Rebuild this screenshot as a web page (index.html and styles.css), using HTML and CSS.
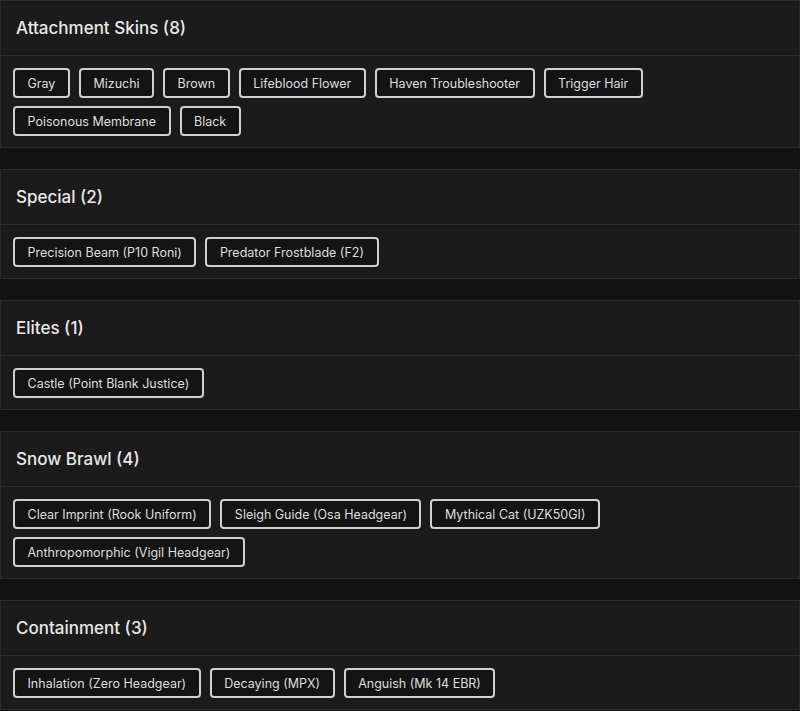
FILE: index.html
```html
<!DOCTYPE html>
<html>
<head>
<meta charset="utf-8">
<link rel="stylesheet" href="styles.css">
</head>
<body>
<div class="list">
  <section class="card">
    <div class="card-head">Attachment Skins (8)</div>
    <div class="card-body">
      <span class="tag">Gray</span>
      <span class="tag">Mizuchi</span>
      <span class="tag">Brown</span>
      <span class="tag">Lifeblood Flower</span>
      <span class="tag">Haven Troubleshooter</span>
      <span class="tag">Trigger Hair</span>
      <span class="tag">Poisonous Membrane</span>
      <span class="tag">Black</span>
    </div>
  </section>
  <section class="card">
    <div class="card-head">Special (2)</div>
    <div class="card-body">
      <span class="tag">Precision Beam (P10 Roni)</span>
      <span class="tag">Predator Frostblade (F2)</span>
    </div>
  </section>
  <section class="card">
    <div class="card-head">Elites (1)</div>
    <div class="card-body">
      <span class="tag">Castle (Point Blank Justice)</span>
    </div>
  </section>
  <section class="card">
    <div class="card-head">Snow Brawl (4)</div>
    <div class="card-body">
      <span class="tag">Clear Imprint (Rook Uniform)</span>
      <span class="tag">Sleigh Guide (Osa Headgear)</span>
      <span class="tag">Mythical Cat (UZK50GI)</span>
      <span class="tag">Anthropomorphic (Vigil Headgear)</span>
    </div>
  </section>
  <section class="card">
    <div class="card-head">Containment (3)</div>
    <div class="card-body">
      <span class="tag">Inhalation (Zero Headgear)</span>
      <span class="tag">Decaying (MPX)</span>
      <span class="tag">Anguish (Mk 14 EBR)</span>
    </div>
  </section>
</div>
</body>
</html>
```
FILE: styles.css
```css
html, body {
  margin: 0;
  padding: 0;
  background: #121212;
}
body {
  font-family: Inter, "Noto Sans", sans-serif;
  color: #e6e6e6;
}
.list {
  display: flex;
  flex-direction: column;
  gap: 21px;
}
.card {
  background: #1b1b1b;
  border: 1px solid #2b2b2b;
}
.card-head {
  height: 55px;
  box-sizing: border-box;
  padding: 0 15px;
  display: flex;
  align-items: center;
  font-size: 17px;
  font-weight: 500;
  color: #e8e8e8;
  border-bottom: 1px solid #2b2b2b;
}
.card-body {
  padding: 12px 12px 11px 12px;
  display: flex;
  flex-wrap: wrap;
  gap: 8px 9px;
}
.tag {
  display: inline-flex;
  align-items: center;
  height: 30px;
  box-sizing: border-box;
  padding: 0 12.5px;
  border: 2px solid #d0d0d0;
  border-radius: 4px;
  background: #141414;
  font-size: 12.5px;
  color: #dedede;
}
```
